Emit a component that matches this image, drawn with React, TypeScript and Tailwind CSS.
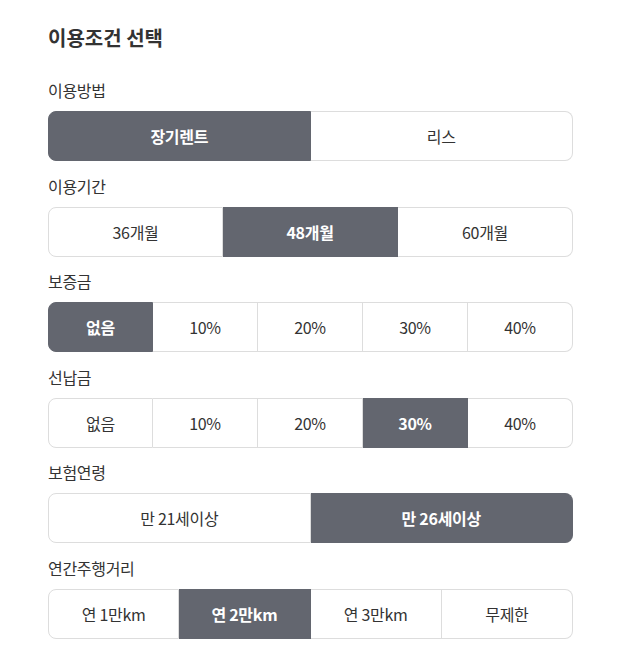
import { useState } from "react";

const FONT = { fontFamily: '"Noto Sans CJK KR", "Noto Sans", sans-serif' };

const GROUPS = [
  { label: "이용방법", options: ["장기렌트", "리스"], selected: 0 },
  { label: "이용기간", options: ["36개월", "48개월", "60개월"], selected: 1 },
  { label: "보증금", options: ["없음", "10%", "20%", "30%", "40%"], selected: 0 },
  { label: "선납금", options: ["없음", "10%", "20%", "30%", "40%"], selected: 3 },
  { label: "보험연령", options: ["만 21세이상", "만 26세이상"], selected: 1 },
  { label: "연간주행거리", options: ["연 1만km", "연 2만km", "연 3만km", "무제한"], selected: 1 },
];

const COLS: Record<number, string> = {
  2: "grid-cols-2",
  3: "grid-cols-3",
  4: "grid-cols-4",
  5: "grid-cols-5",
};

function Segment({
  options,
  value,
  onChange,
}: {
  options: string[];
  value: number;
  onChange: (i: number) => void;
}) {
  return (
    <div className={`grid h-[50px] ${COLS[options.length]}`}>
      {options.map((o, i) => {
        const active = i === value;
        const first = i === 0;
        const last = i === options.length - 1;
        return (
          <button
            key={o}
            type="button"
            onClick={() => onChange(i)}
            className={`flex items-center justify-center border-y border-r text-[16px] leading-none tracking-[-0.3px] ${
              first ? "border-l rounded-l-lg" : ""
            } ${last ? "rounded-r-lg" : ""} ${
              active
                ? "bg-[#63666f] border-[#63666f] text-white font-bold"
                : "bg-white border-[#dddddd] text-[#333]"
            }`}
          >
            {o}
          </button>
        );
      })}
    </div>
  );
}

export default function App() {
  const [sel, setSel] = useState(GROUPS.map((g) => g.selected));

  return (
    <div className="min-h-screen bg-white" style={FONT}>
      <div className="w-[525px] ml-12 pt-6">
        <h2 className="text-[20px] leading-[28px] font-bold text-[#333]">
          이용조건 선택
        </h2>
        <div className="mt-[27px]">
          {GROUPS.map((g, gi) => (
            <div key={g.label} className={gi > 0 ? "mt-[13.6px]" : ""}>
              <div className="text-[16px] leading-[22px] text-[#333] mb-[10px] tracking-[-0.3px]">
                {g.label}
              </div>
              <Segment
                options={g.options}
                value={sel[gi]}
                onChange={(i) => setSel((prev) => prev.map((v, j) => (j === gi ? i : v)))}
              />
            </div>
          ))}
        </div>
      </div>
    </div>
  );
}
